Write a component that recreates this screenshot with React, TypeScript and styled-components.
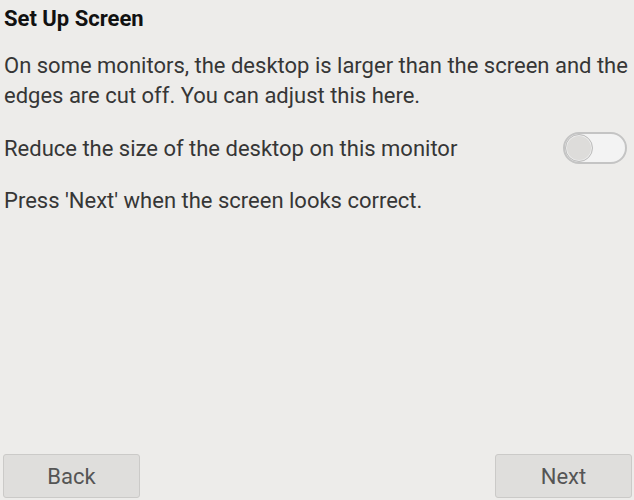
import React, { useState } from "react";
import styled, { createGlobalStyle } from "styled-components";

const GlobalStyle = createGlobalStyle`
  html, body {
    margin: 0;
    padding: 0;
    background: #edecea;
  }
  body {
    font-family: Roboto, "Liberation Sans", sans-serif;
  }
`;

export default function App() {
  const [reduced, setReduced] = useState(false);

  return (
    <>
      <GlobalStyle />
      <Page>
        <Title>Set Up Screen</Title>
        <Text $top={19}>
          On some monitors, the desktop is larger than the screen and the
          edges are cut off. You can adjust this here.
        </Text>
        <OptionRow>
          <Text>Reduce the size of the desktop on this monitor</Text>
          <Switch $on={reduced} onClick={() => setReduced(!reduced)}>
            <Knob $on={reduced} />
          </Switch>
        </OptionRow>
        <Text $top={22}>Press 'Next' when the screen looks correct.</Text>
        <ButtonBar>
          <Button>Back</Button>
          <Button>Next</Button>
        </ButtonBar>
      </Page>
    </>
  );
}

const Page = styled.div`
  display: flex;
  flex-direction: column;
  height: 100vh;
  box-sizing: border-box;
  padding: 6px 2px 2px 4px;
`;

const Title = styled.h1`
  margin: 0;
  font-size: 22px;
  line-height: 26px;
  font-weight: 700;
  color: #111;
`;

const Text = styled.p<{ $top?: number }>`
  margin: ${({ $top }) => $top || 0}px 0 0;
  font-size: 22px;
  line-height: 30px;
  color: #363636;
`;

const OptionRow = styled.div`
  display: flex;
  align-items: flex-start;
  justify-content: space-between;
  margin-top: 23px;
  padding-right: 5px;
`;

const Switch = styled.div<{ $on: boolean }>`
  position: relative;
  width: 64px;
  height: 32px;
  box-sizing: border-box;
  border: 2px solid #c4c4c4;
  border-radius: 16px;
  background: ${({ $on }) => ($on ? "#8fa9d6" : "#f3f3f3")};
  margin-top: -2px;
  cursor: pointer;
`;

const Knob = styled.div<{ $on: boolean }>`
  position: absolute;
  top: 0;
  left: ${({ $on }) => ($on ? "32px" : "0")};
  width: 28px;
  height: 28px;
  box-sizing: border-box;
  border-radius: 50%;
  background: #dddcda;
  border: 1px solid #bdbdbd;
  box-shadow: inset 0 0 0 1px #ececec;
`;

const ButtonBar = styled.div`
  display: flex;
  justify-content: space-between;
  margin-top: auto;
`;

const Button = styled.button`
  width: 137px;
  height: 44px;
  margin-left: -1px;
  border: 1px solid #cbcac8;
  border-radius: 3px;
  background: #dfdedc;
  color: #555;
  font-family: Roboto, "Liberation Sans", sans-serif;
  font-size: 22px;
  cursor: pointer;
`;
